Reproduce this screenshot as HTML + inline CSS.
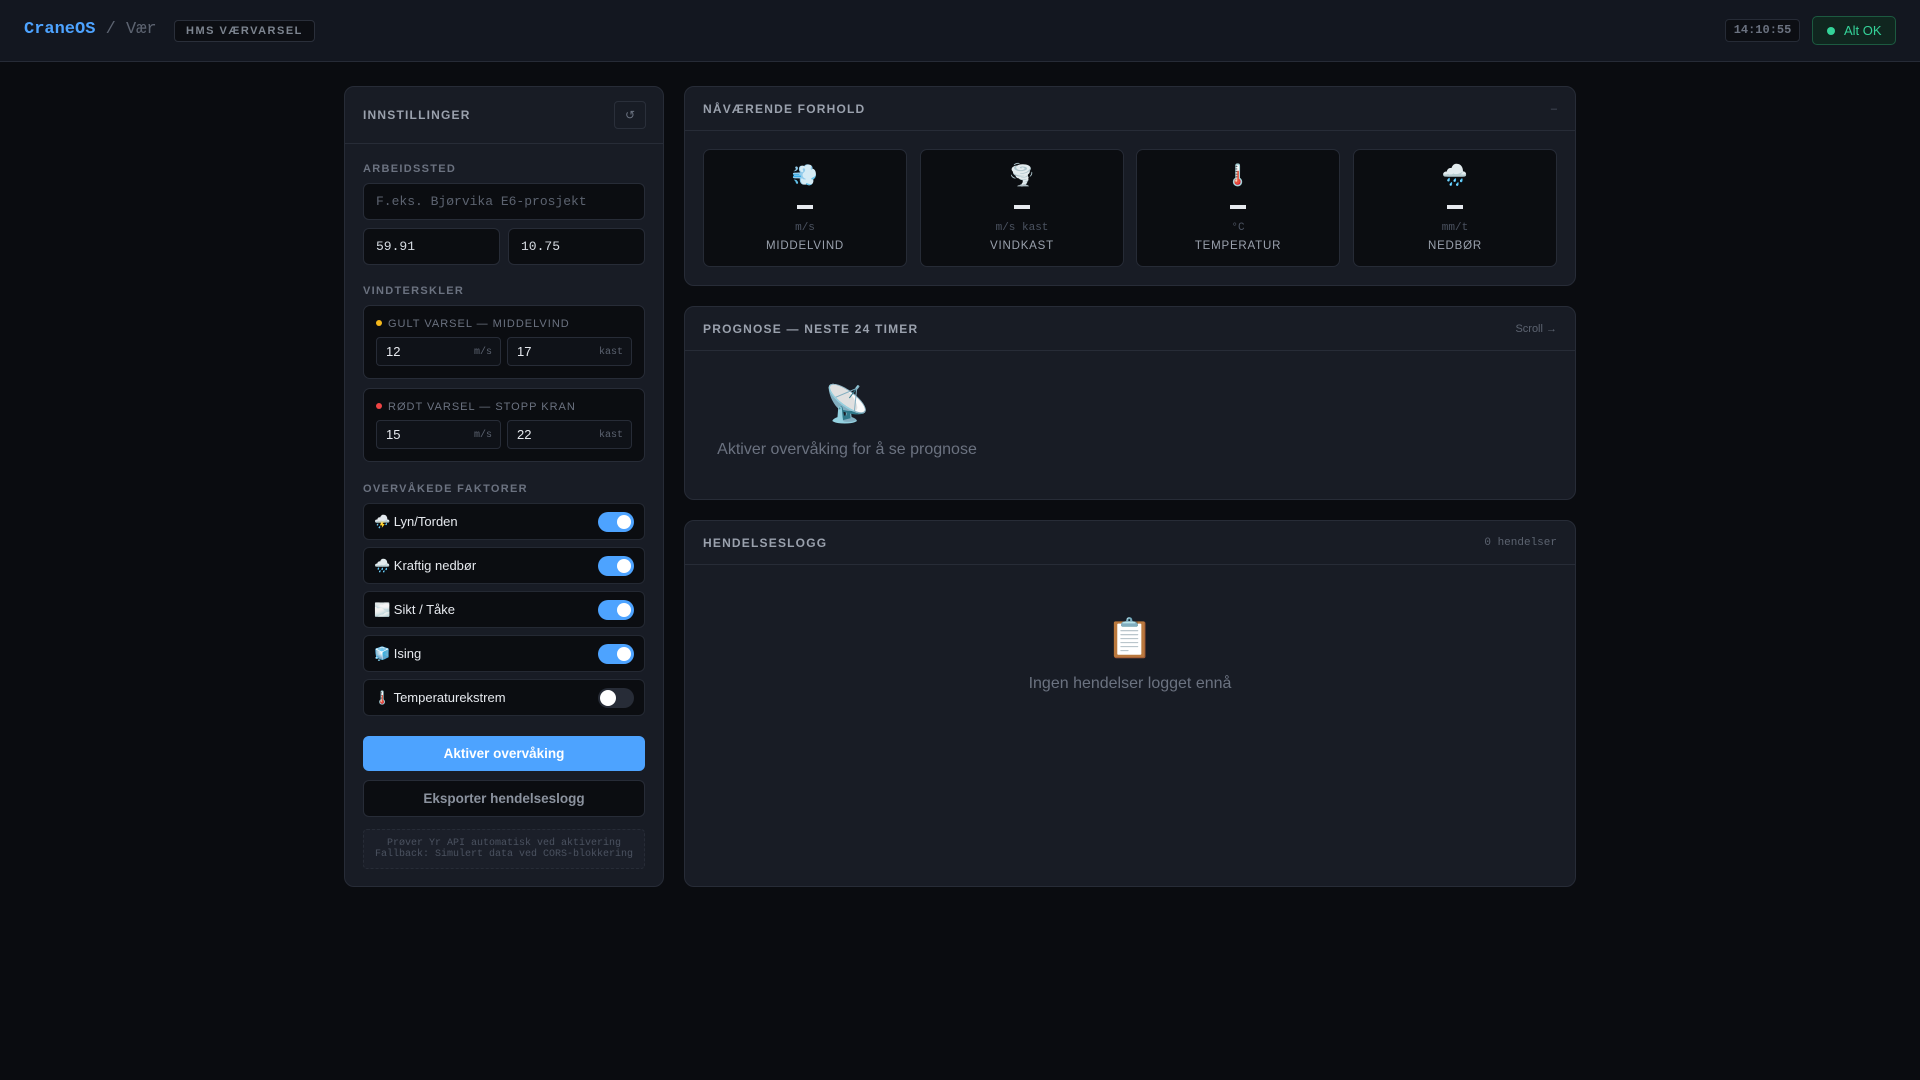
<!DOCTYPE html>
<html><head><meta charset="utf-8"><style>
*{box-sizing:border-box;margin:0;padding:0}
body{width:1920px;height:1080px;background:#0a0c10;font-family:"Liberation Sans","Noto Sans CJK JP",sans-serif;color:#c9d1d9;position:relative;overflow:hidden}
.hdr{position:absolute;left:0;top:0;width:1920px;height:62px;background:#131720;border-bottom:1px solid #262b36}
.logo{position:absolute;left:24px;top:20px;font-family:"Liberation Mono",monospace;font-size:17px;font-weight:bold;color:#4da3ff;white-space:nowrap}
.logo span{color:#5c6370;font-weight:normal}
.badge{position:absolute;left:174px;top:20px;height:22px;padding:0 11px;border:1px solid #2a2f3a;border-radius:4px;background:#0c0e13;font-size:11px;font-weight:bold;letter-spacing:1.5px;color:#7d8590;line-height:20px}
.clock{position:absolute;left:1725px;top:19px;width:75px;height:23px;border:1px solid #262b36;border-radius:4px;background:#0c0e13;font-family:"Liberation Mono",monospace;font-size:12px;font-weight:bold;color:#6b7280;text-align:center;line-height:21px}
.ok{position:absolute;left:1812px;top:16px;width:84px;height:29px;border:1px solid #1c5a40;border-radius:5px;background:#10261f;color:#34d399;font-size:13px;line-height:27px;padding-left:31px}
.ok:before{content:"";position:absolute;left:14px;top:10px;width:8px;height:8px;border-radius:50%;background:#34d399}
.panel{position:absolute;background:#181c25;border:1px solid #272c37;border-radius:10px}
.ph{height:44px;border-bottom:1px solid #272c37;padding:0 18px;display:flex;align-items:center;justify-content:space-between}
.pt{font-size:12px;font-weight:bold;letter-spacing:1.2px;color:#9aa1ad}
.lbl{position:absolute;left:18px;font-size:11px;font-weight:bold;letter-spacing:1.3px;color:#6b7280}
.inp{position:absolute;background:#0b0d11;border:1px solid #272c37;border-radius:6px;font-family:"Liberation Mono",monospace;font-size:13px;color:#d6dbe2;padding-left:12px;display:flex;align-items:center}
.box{position:absolute;left:18px;width:282px;background:#0b0d11;border:1px solid #272c37;border-radius:7px}
.bt{position:absolute;left:12px;top:12px;font-size:11px;letter-spacing:1px;color:#6b7280}
.bt i{display:inline-block;width:6px;height:6px;border-radius:50%;margin-right:6px;vertical-align:1px}
.si{position:absolute;top:31px;width:125px;height:29px;border:1px solid #272c37;border-radius:4px;background:#0f1218;font-size:13px;color:#e6e9ee;padding-left:9px;line-height:27px}
.si b{position:absolute;right:8px;top:1px;font-family:"Liberation Mono",monospace;font-size:10px;font-weight:normal;color:#5c6370}
.row{position:absolute;left:18px;width:282px;height:37px;background:#0b0d11;border:1px solid #242933;border-radius:6px;font-size:13px;color:#e6e9ee;line-height:35px;padding-left:10px}
.tg{position:absolute;right:10px;top:8px;width:36px;height:20px;border-radius:10px;background:#4da3ff}
.tg:after{content:"";position:absolute;right:3px;top:3px;width:14px;height:14px;border-radius:50%;background:#fff}
.tg.off{background:#272c37}.tg.off:after{right:auto;left:2px;width:16px;height:16px;top:2px}
.tile{position:absolute;top:18px;width:204px;height:118px;background:#0b0d11;border:1px solid #262b36;border-radius:7px;text-align:center}
.tile .ic{position:absolute;top:14px;left:0;right:0;font-size:21px}
.tile .v{position:absolute;top:55px;left:93px;width:16px;height:4px;background:#e6e9ee}
.tile .u{position:absolute;top:72px;left:0;right:0;font-family:"Liberation Mono",monospace;font-size:11px;color:#4b5260}
.tile .n{position:absolute;top:90px;left:0;right:0;font-size:11.5px;letter-spacing:.8px;color:#9aa1ad}
</style></head><body>
<div class="hdr">
<div class="logo">CraneOS <span>/ Vær</span></div>
<div class="badge">HMS VÆRVARSEL</div>
<div class="clock">14:10:55</div>
<div class="ok">Alt OK</div>
</div>

<div class="panel" style="left:344px;top:86px;width:320px;height:801px">
<div class="ph" style="height:57px"><span class="pt">INNSTILLINGER</span><span style="width:32px;height:28px;border:1px solid #2a2f3a;border-radius:4px;color:#6b7280;font-size:12px;text-align:center;line-height:26px;margin-right:-1px">↺</span></div>
<div class="lbl" style="top:76px">ARBEIDSSTED</div>
<div class="inp" style="left:18px;top:96px;width:282px;height:37px;color:#5c6370">F.eks. Bjørvika E6-prosjekt</div>
<div class="inp" style="left:18px;top:141px;width:137px;height:37px">59.91</div>
<div class="inp" style="left:163px;top:141px;width:137px;height:37px">10.75</div>
<div class="lbl" style="top:198px">VINDTERSKLER</div>
<div class="box" style="top:218px;height:74px"><div class="bt"><i style="background:#f5b81c"></i>GULT VARSEL — MIDDELVIND</div>
<div class="si" style="left:12px">12<b>m/s</b></div><div class="si" style="left:143px">17<b>kast</b></div></div>
<div class="box" style="top:301px;height:74px"><div class="bt"><i style="background:#ef4444"></i>RØDT VARSEL — STOPP KRAN</div>
<div class="si" style="left:12px">15<b>m/s</b></div><div class="si" style="left:143px">22<b>kast</b></div></div>
<div class="lbl" style="top:396px">OVERVÅKEDE FAKTORER</div>
<div class="row" style="top:416px">⛈️ Lyn/Torden<span class="tg"></span></div>
<div class="row" style="top:460px">🌧️ Kraftig nedbør<span class="tg"></span></div>
<div class="row" style="top:504px">🌫️ Sikt / Tåke<span class="tg"></span></div>
<div class="row" style="top:548px">🧊 Ising<span class="tg"></span></div>
<div class="row" style="top:592px">🌡️ Temperaturekstrem<span class="tg off"></span></div>
<div style="position:absolute;left:18px;top:649px;width:282px;height:35px;background:#4da3ff;border-radius:6px;color:#fff;font-weight:bold;font-size:13.5px;text-align:center;line-height:35px">Aktiver overvåking</div>
<div style="position:absolute;left:18px;top:693px;width:282px;height:37px;background:#0b0d11;border:1px solid #272c37;border-radius:6px;color:#8b929e;font-weight:bold;font-size:13.5px;text-align:center;line-height:35px">Eksporter hendelseslogg</div>
<div style="position:absolute;left:18px;top:742px;width:282px;height:40px;border:1px dashed #272c37;background:#1b1f29;border-radius:4px;font-family:'Liberation Mono',monospace;font-size:10px;color:#4b5260;text-align:center;line-height:11px;padding-top:8px">Prøver Yr API automatisk ved aktivering<br>Fallback: Simulert data ved CORS-blokkering</div>
</div>

<div class="panel" style="left:684px;top:86px;width:892px;height:200px">
<div class="ph"><span class="pt">NÅVÆRENDE FORHOLD</span><span style="color:#4b5260;font-size:11px">–</span></div>
<div style="position:relative">
<div class="tile" style="left:18px"><div class="ic">💨</div><div class="v"></div><div class="u">m/s</div><div class="n">MIDDELVIND</div></div>
<div class="tile" style="left:235px"><div class="ic">🌪️</div><div class="v"></div><div class="u">m/s kast</div><div class="n">VINDKAST</div></div>
<div class="tile" style="left:451px"><div class="ic">🌡️</div><div class="v"></div><div class="u">°C</div><div class="n">TEMPERATUR</div></div>
<div class="tile" style="left:668px"><div class="ic">🌧️</div><div class="v"></div><div class="u">mm/t</div><div class="n">NEDBØR</div></div>
</div></div>

<div class="panel" style="left:684px;top:306px;width:892px;height:194px">
<div class="ph"><span class="pt">PROGNOSE — NESTE 24 TIMER</span><span style="color:#5c6370;font-size:11px">Scroll →</span></div>
<div style="position:absolute;left:12px;top:76px;width:300px;text-align:center;font-size:36px">📡</div>
<div style="position:absolute;left:12px;top:134px;width:300px;text-align:center;font-size:16px;color:#6b7280;white-space:nowrap">Aktiver overvåking for å se prognose</div>
</div>

<div class="panel" style="left:684px;top:520px;width:892px;height:367px">
<div class="ph"><span class="pt">HENDELSESLOGG</span><span style="color:#5c6370;font-size:11px;font-family:'Liberation Mono',monospace">0 hendelser</span></div>
<div style="position:absolute;left:0;right:0;top:96px;text-align:center;font-size:38px">📋</div>
<div style="position:absolute;left:0;right:0;top:154px;text-align:center;font-size:16px;color:#6b7280">Ingen hendelser logget ennå</div>
</div>
</body></html>
